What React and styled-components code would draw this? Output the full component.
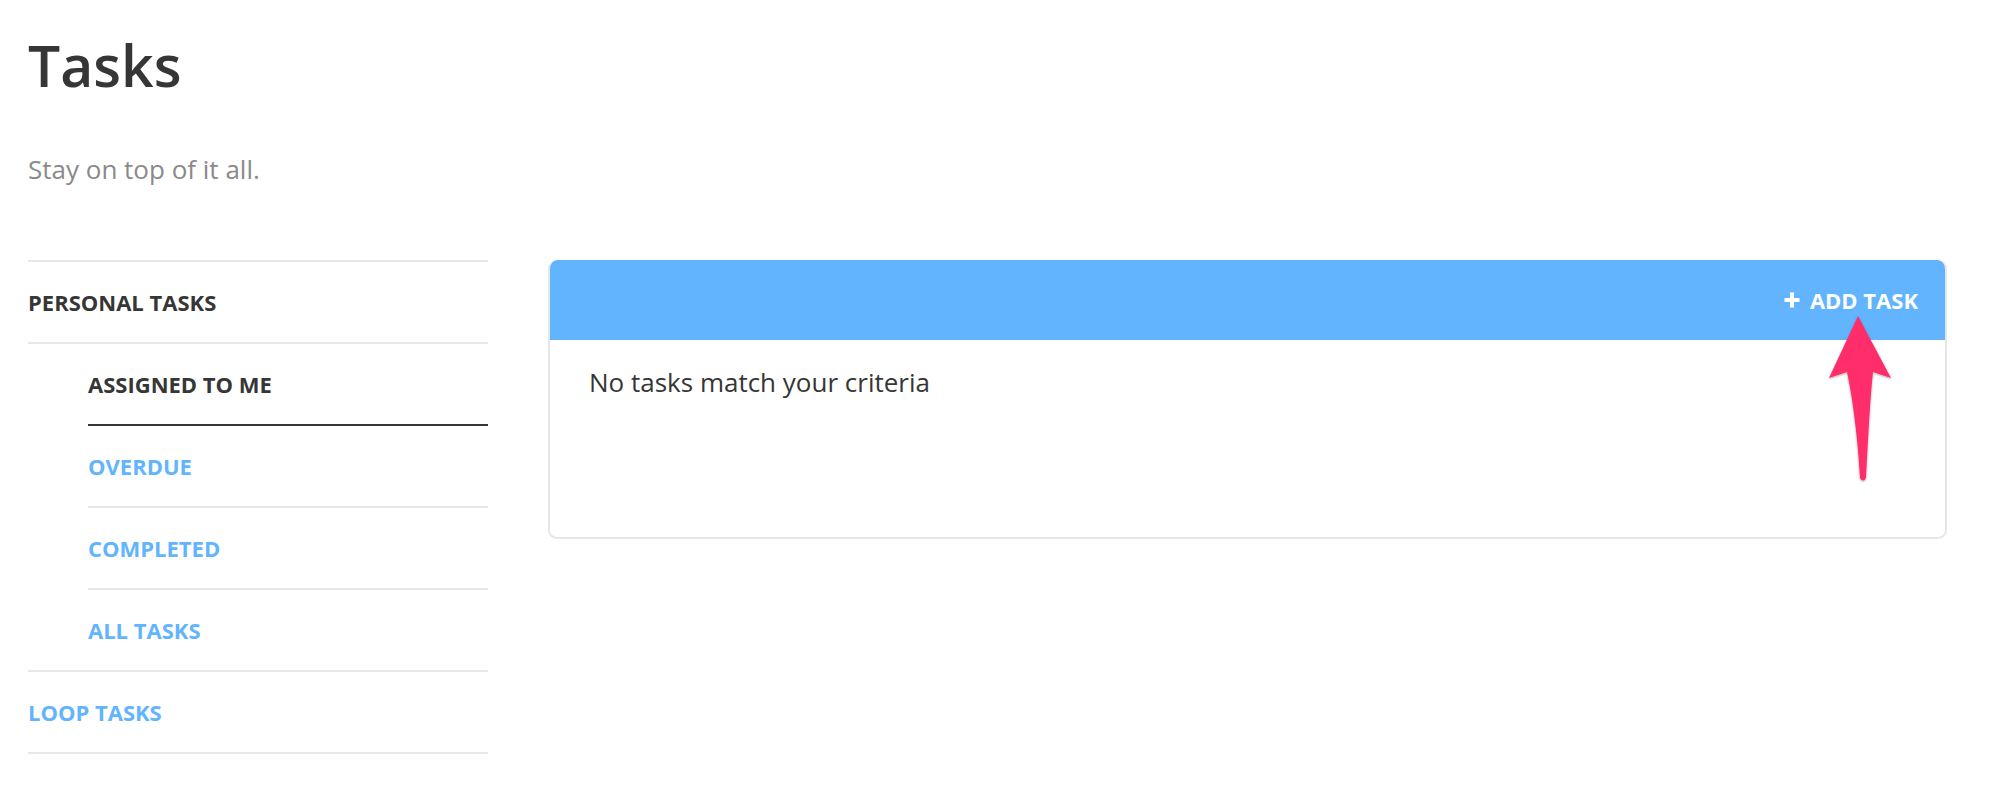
import React from 'react';
import styled, { createGlobalStyle } from 'styled-components';

const GlobalStyle = createGlobalStyle`
  body {
    margin: 0;
    background: #fff;
    font-family: "Open Sans", "Noto Sans", sans-serif;
    color: #363636;
  }
`;

const Page = styled.div`
  position: relative;
  padding: 36px 53px 0 28px;
`;

const Title = styled.h1`
  margin: 0;
  font-size: 57px;
  line-height: 58px;
  font-weight: 600;
  color: #363636;
`;

const Subtitle = styled.p`
  margin: 63px 0 0;
  font-size: 26px;
  line-height: 24px;
  color: #8a8a8a;
`;

const Content = styled.div`
  display: flex;
  align-items: flex-start;
  gap: 60px;
  margin-top: 79px;
`;

const Sidebar = styled.ul`
  list-style: none;
  margin: 0;
  padding: 0;
  width: 460px;
  flex-shrink: 0;
  border-top: 2px solid #e8e6e8;
`;

const Group = styled.li`
  border-bottom: 2px solid #e8e6e8;
`;

const NavRow = styled.a`
  display: flex;
  align-items: center;
  height: 80px;
  font-size: 22px;
  font-weight: 700;
  text-transform: uppercase;
  text-decoration: none;
  color: ${(p) => (p.$active ? '#363636' : '#62b4fe')};
  cursor: pointer;
  border-bottom: ${(p) => (p.$divider ? '2px solid #e8e6e8' : 'none')};
`;

const SubList = styled.ul`
  list-style: none;
  margin: 0;
  padding: 0 0 0 60px;
`;

const SubItem = styled.li`
  border-bottom: ${(p) =>
    p.$last ? 'none' : p.$active ? '2px solid #363636' : '2px solid #e8e6e8'};
`;

const Card = styled.section`
  flex: 1;
  height: 279px;
  box-sizing: border-box;
  border: 2px solid #e6e6e6;
  border-top: none;
  border-radius: 9px;
  overflow: hidden;
`;

const CardHeader = styled.header`
  display: flex;
  justify-content: flex-end;
  align-items: center;
  height: 80px;
  margin: 0 -2px;
  padding: 0 29px;
  background: #62b4fe;
  border-radius: 9px 9px 0 0;
`;

const AddButton = styled.button`
  display: flex;
  align-items: center;
  gap: 10px;
  padding: 0;
  border: none;
  background: none;
  color: #fff;
  font-family: "Open Sans", "Noto Sans", sans-serif;
  font-size: 22px;
  font-weight: 700;
  text-transform: uppercase;
  cursor: pointer;
`;

const CardBody = styled.div`
  padding: 27px 39px;
  font-size: 26px;
  line-height: 30px;
  color: #363636;
`;

const Arrow = styled.svg`
  position: absolute;
  left: 1820px;
  top: 310px;
  width: 80px;
  height: 180px;
  overflow: visible;
`;

const PlusIcon = () => (
  <svg width="16" height="16" viewBox="0 0 16 16">
    <path d="M8 0.5v15M0.5 8h15" stroke="#fff" strokeWidth="4" />
  </svg>
);

const subItems = ['Assigned to me', 'Overdue', 'Completed', 'All tasks'];

export default function App() {
  return (
    <>
      <GlobalStyle />
      <Page>
        <Title>Tasks</Title>
        <Subtitle>Stay on top of it all.</Subtitle>
        <Content>
          <Sidebar>
            <Group>
              <NavRow $active $divider>Personal tasks</NavRow>
              <SubList>
                {subItems.map((label, i) => (
                  <SubItem key={label} $active={i === 0} $last={i === subItems.length - 1}>
                    <NavRow $active={i === 0}>{label}</NavRow>
                  </SubItem>
                ))}
              </SubList>
            </Group>
            <Group>
              <NavRow>Loop tasks</NavRow>
            </Group>
          </Sidebar>
          <Card>
            <CardHeader>
              <AddButton>
                <PlusIcon />
                Add task
              </AddButton>
            </CardHeader>
            <CardBody>No tasks match your criteria</CardBody>
          </Card>
        </Content>
        <Arrow viewBox="0 0 80 180">
          <defs>
            <filter id="arrowShadow" x="-30%" y="-10%" width="160%" height="120%">
              <feDropShadow dx="0" dy="1" stdDeviation="1.2" floodColor="#000" floodOpacity="0.35" />
            </filter>
          </defs>
          <path
            d="M38 6 L71 68 L53 62 C50 90 48 130 46 168 Q43 173 40 168 C38 130 33 90 27 62 L9 68 Z"
            fill="#ff2d6b"
            filter="url(#arrowShadow)"
          />
        </Arrow>
      </Page>
    </>
  );
}
